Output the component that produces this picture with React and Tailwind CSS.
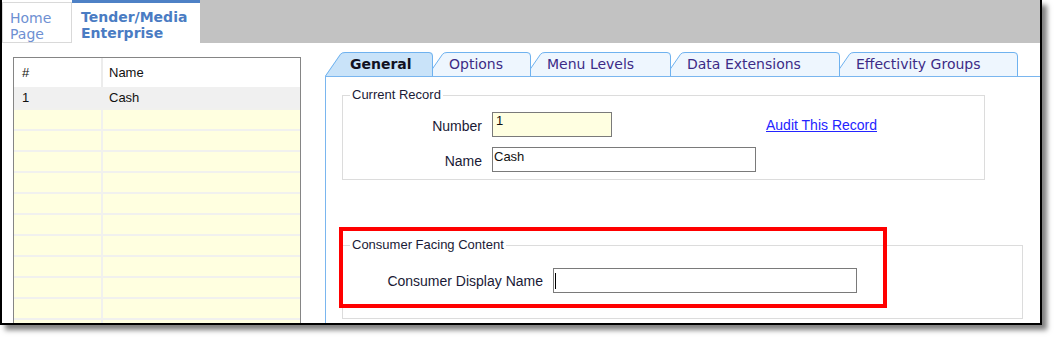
import React from "react";

const TABS = [
  { label: "General", w: 108, active: true, cls: "w-[108px] z-[5] pl-[25px]" },
  { label: "Options", w: 104, active: false, cls: "w-[104px] z-[4] -ml-[6px] pl-[22px]" },
  { label: "Menu Levels", w: 146, active: false, cls: "w-[146px] z-[3] -ml-[6px] pl-[22px]" },
  { label: "Data Extensions", w: 175, active: false, cls: "w-[175px] z-[2] -ml-[6px] pl-[22px]" },
  { label: "Effectivity Groups", w: 184, active: false, cls: "w-[184px] z-[1] -ml-[6px] pl-[22px]" },
];

function Tab({ label, w, active, cls }) {
  const s = 17;
  const fill = `M0,24 L${s - 2},2 Q${s},0 ${s + 3},0 L${w - 4},0 Q${w},0 ${w},4 L${w},24 Z`;
  const stroke = `M0.5,24 L${s - 1.5},2.3 Q${s},0.5 ${s + 3},0.5 L${w - 4},0.5 Q${w - 0.5},0.5 ${w - 0.5},4 L${w - 0.5},24`;
  return (
    <div className={`relative h-[24px] flex items-center shrink-0 ${cls}`}>
      <svg className="absolute inset-0" width={w} height={24} viewBox={`0 0 ${w} 24`}>
        <path d={fill} fill={active ? "#c9e3f9" : "#eef6fe"} />
        <path d={stroke} fill="none" stroke="#6fb2ef" strokeWidth="1" />
      </svg>
      <span
        className={`relative text-[14px] leading-[16px] font-['DejaVu_Sans',Verdana,sans-serif] ${
          active ? "font-bold text-[#111122]" : "text-[#3d2b86]"
        }`}
      >
        {label}
      </span>
    </div>
  );
}

export default function App() {
  const yellowRows = Array.from({ length: 11 });
  return (
    <div className="w-[1056px] h-[341px] bg-white overflow-hidden">
      <div className="relative w-[1042px] h-[325px] border-x-2 border-b-2 border-black bg-white shadow-[5px_5px_5px_rgba(0,0,0,0.5)] flex flex-col">
        {/* top tab bar */}
        <div className="flex h-[43px] shrink-0 font-['DejaVu_Sans',Verdana,sans-serif] text-[14px] leading-[16px]">
          <div className="w-[70px] h-[41px] mt-[2px] border border-[#d9d9d9] pl-[7px] pt-[7px] text-[#6e90d2]">
            Home
            <br />
            Page
          </div>
          <div className="w-[128px] h-[43px] flex flex-col bg-white">
            <div className="h-[3px] bg-[#4e81c6]" />
            <div className="pl-[9px] pt-[6px] font-bold text-[#4a7cc3]">
              Tender/Media
              <br />
              Enterprise
            </div>
          </div>
          <div className="flex-1 bg-[#c2c2c2]" />
        </div>

        {/* body */}
        <div className="flex flex-1 overflow-hidden">
          {/* grid */}
          <div className="w-[323px] shrink-0 pl-[11px] pt-[14px]">
            <div className="w-[288px] h-[300px] border border-[#858585] bg-white overflow-hidden font-['Liberation_Sans',Arial,sans-serif] text-[13px] text-[#111]">
              <div className="flex h-[29px] items-center">
                <div className="w-[87px] pl-[8px]">#</div>
                <div className="flex-1 h-full flex items-center border-l-2 border-[#ececec] pl-[6px]">Name</div>
              </div>
              <div className="flex h-[21px] items-center bg-[#f0f0f0]">
                <div className="w-[87px] pl-[8px]">1</div>
                <div className="flex-1 h-full flex items-center border-l-2 border-[#f0f0f0] pl-[6px]">Cash</div>
              </div>
              {yellowRows.map((_, i) => (
                <div key={i} className="flex h-[21px] border-t-2 border-[#f1f1ee] bg-[#ffffe0]">
                  <div className="w-[87px]" />
                  <div className="flex-1 border-l-2 border-[#f1f1ee]" />
                </div>
              ))}
            </div>
          </div>

          {/* tab pane */}
          <div className="flex-1 flex flex-col pt-[9px]">
            <div className="flex h-[24px] shrink-0">
              {TABS.map((t) => (
                <Tab key={t.label} {...t} />
              ))}
            </div>
            <div className="flex-1 border-t border-l border-[#7ab6ef] bg-white font-['Liberation_Sans',Arial,sans-serif] text-[#1a1a36]">
              <fieldset className="ml-[16px] mt-[10px] w-[643px] border border-[#dcdcdc] p-0 pb-[7px]">
                <legend className="ml-[7px] px-[2px] text-[13px] leading-[16px]">Current Record</legend>
                <div className="flex items-center mt-[9px] h-[25px]">
                  <div className="w-[149px] pr-[10px] pt-[4px] text-right text-[14px]">Number</div>
                  <div className="w-[120px] h-[25px] border border-[#7a7a7a] bg-[#ffffe1] pl-[3px] pt-[1px] text-[13px] leading-[14px] text-[#111]">
                    1
                  </div>
                  <a className="ml-[154px] pt-[2px] text-[14px] underline text-[#2424ff] cursor-pointer">Audit This Record</a>
                </div>
                <div className="flex items-center mt-[10px] h-[25px]">
                  <div className="w-[149px] pr-[10px] pt-[4px] text-right text-[14px]">Name</div>
                  <div className="w-[264px] h-[25px] border border-[#7a7a7a] bg-white pl-[1px] pt-[2px] text-[13px] leading-[14px] text-[#111]">
                    Cash
                  </div>
                </div>
              </fieldset>

              <fieldset className="ml-[16px] mt-[57px] w-[681px] border border-[#dcdcdc] p-0 pb-[25px]">
                <legend className="ml-[7px] px-[2px] text-[13px] leading-[16px]">Consumer Facing Content</legend>
                <div className="flex items-center mt-[15px] h-[25px]">
                  <div className="w-[210px] pr-[10px] pt-[2px] text-right text-[14px]">Consumer Display Name</div>
                  <div className="w-[304px] h-[25px] border border-[#7a7a7a] bg-white flex items-center pl-[1px]">
                    <span className="w-px h-[16px] bg-black" />
                  </div>
                </div>
              </fieldset>
            </div>
          </div>
        </div>

        {/* red highlight */}
        <div className="absolute left-[337px] top-[227px] w-[548px] h-[81px] border-4 border-[#ff0000] pointer-events-none" />
      </div>
    </div>
  );
}
